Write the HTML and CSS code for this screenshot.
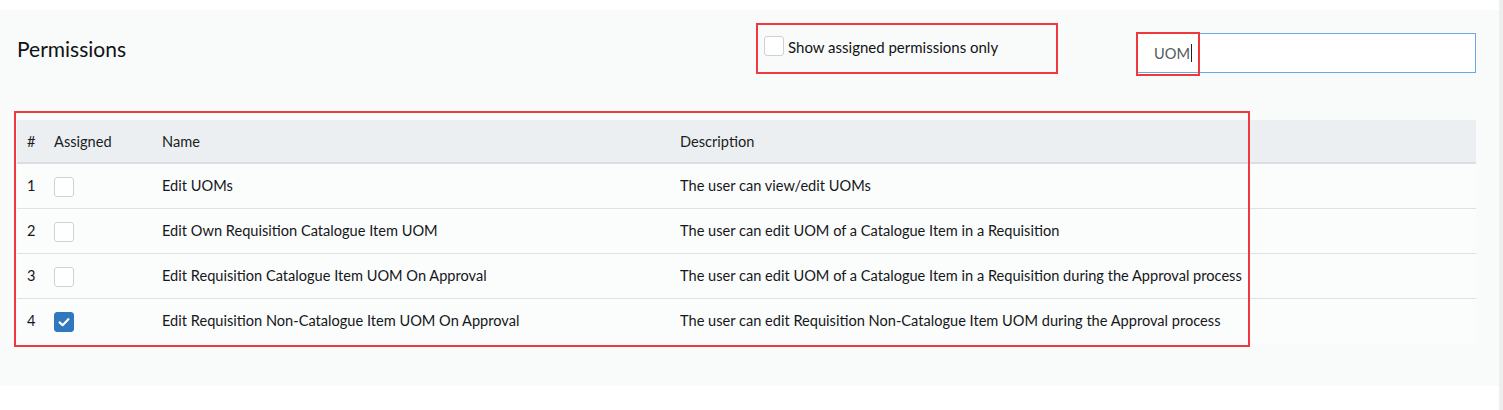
FILE: index.html
```html
<!DOCTYPE html>
<html lang="en">
<head>
<meta charset="utf-8">
<title>Permissions</title>
<link rel="stylesheet" href="styles.css">
</head>
<body>
<div class="page">
  <main class="panel">
    <div class="panel-head">
      <h2 class="title">Permissions</h2>
      <label class="filter-box">
        <span class="cb"></span>
        <span class="filter-text">Show assigned permissions only</span>
      </label>
      <div class="search">
        <span class="search-value">UOM</span><span class="caret"></span>
        <span class="mark mark-search"></span>
      </div>
    </div>
    <div class="table-wrap">
      <span class="mark mark-table"></span>
      <table class="perm-table">
        <colgroup>
          <col class="c-num"><col class="c-assigned"><col class="c-name"><col>
        </colgroup>
        <thead>
          <tr><th>#</th><th>Assigned</th><th>Name</th><th>Description</th></tr>
        </thead>
        <tbody>
          <tr><td>1</td><td><span class="cb"></span></td><td>Edit UOMs</td><td>The user can view/edit UOMs</td></tr>
          <tr><td>2</td><td><span class="cb"></span></td><td>Edit Own Requisition Catalogue Item UOM</td><td>The user can edit UOM of a Catalogue Item in a Requisition</td></tr>
          <tr><td>3</td><td><span class="cb"></span></td><td>Edit Requisition Catalogue Item UOM On Approval</td><td>The user can edit UOM of a Catalogue Item in a Requisition during the Approval process</td></tr>
          <tr><td>4</td><td><span class="cb cb-on"><svg viewBox="0 0 20 20" width="20" height="20"><path d="M5.6 10.4 L8.6 13.2 L14.4 7.2" fill="none" stroke="#fff" stroke-width="2.2" stroke-linecap="round" stroke-linejoin="round"/></svg></span></td><td>Edit Requisition Non-Catalogue Item UOM On Approval</td><td>The user can edit Requisition Non-Catalogue Item UOM during the Approval process</td></tr>
        </tbody>
      </table>
    </div>
  </main>
  <div class="side-strip"></div>
</div>
</body>
</html>
```
FILE: styles.css
```css
html, body {
  margin: 0;
  padding: 0;
  background: #ffffff;
}
body {
  font-family: "Lato", "Liberation Sans", sans-serif;
  font-size: 14.6px;
  color: #15171a;
}
.page {
  display: flex;
  height: 410px;
  overflow: hidden;
}
.panel {
  width: 1499px;
  margin-top: 10px;
  height: 376px;
  box-sizing: border-box;
  background: #f9fafa;
  padding: 0 23px 0 17px;
}
.side-strip {
  width: 4px;
  background: #eceef0;
}
.panel-head {
  display: flex;
  align-items: flex-start;
  height: 63px;
}
.title {
  margin: 27px 0 0 0;
  width: 739px;
  font-size: 21px;
  line-height: 24px;
  font-weight: 400;
  color: #0f1216;
}
.filter-box {
  margin-top: 13px;
  width: 302px;
  height: 51px;
  box-sizing: border-box;
  border: 2px solid #f0393f;
  padding: 11px 0 0 6px;
  display: flex;
  align-items: flex-start;
  gap: 4px;
}
.filter-text {
  font-size: 15px;
  line-height: 20px;
  margin-top: 1px;
  color: #111316;
}
.cb {
  display: inline-block;
  width: 20px;
  height: 20px;
  box-sizing: border-box;
  border: 1px solid #cfd2d5;
  border-radius: 3px;
  background: #ffffff;
  vertical-align: middle;
}
.cb-on {
  background: #2f78bd;
  border-color: #2f78bd;
  position: relative;
}
.cb-on svg {
  position: absolute;
  left: -1px;
  top: -1px;
}
.search {
  position: relative;
  margin: 23px 0 0 79px;
  width: 339px;
  height: 40px;
  box-sizing: border-box;
  border: 1px solid #6aaae4;
  background: #ffffff;
  padding-left: 16px;
  display: flex;
  align-items: center;
  color: #555a60;
}
.caret {
  display: inline-block;
  width: 1px;
  height: 18px;
  background: #222;
  margin-left: 1px;
}
.mark {
  position: absolute;
  border: 2px solid #f0393f;
  box-sizing: border-box;
  pointer-events: none;
}
.mark-search {
  left: -2px;
  top: -2px;
  width: 64px;
  height: 44px;
}
.table-wrap {
  position: relative;
  margin-top: 47px;
}
.mark-table {
  left: -3px;
  top: -9px;
  width: 1236px;
  height: 236px;
  z-index: 1;
}
.perm-table {
  width: 100%;
  border-collapse: collapse;
  table-layout: fixed;
}
.c-num { width: 27px; }
.c-assigned { width: 108px; }
.c-name { width: 518px; }
.perm-table th,
.perm-table td {
  text-align: left;
  padding: 0 10px;
  vertical-align: middle;
  white-space: nowrap;
}
.perm-table th {
  height: 42px;
  background: #eceff1;
  font-weight: 400;
  color: #1a1d21;
  border-bottom: 2px solid #dcdfe2;
}
.perm-table td {
  height: 43px;
  padding-bottom: 1px;
  border-bottom: 1px solid #dfe2e5;
  background: #fbfcfc;
}
.perm-table tbody tr:last-child td {
  border-bottom: none;
}
.perm-table td .cb {
  margin-top: 2px;
}
```
